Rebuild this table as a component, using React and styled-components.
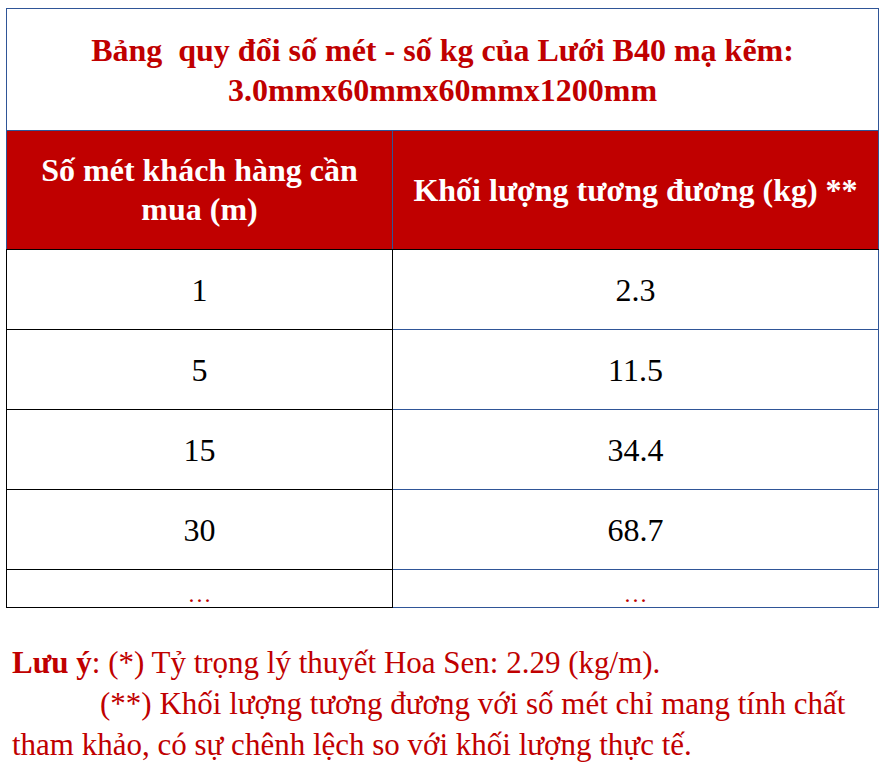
import React from "react";
import styled, { createGlobalStyle } from "styled-components";

const Global = createGlobalStyle`
  html, body { margin: 0; padding: 0; background: #fff; }
  body { font-family: "Liberation Serif", "Times New Roman", serif; }
`;

const Page = styled.div`
  padding: 8px 7px 0 6px;
  width: 885px;
  box-sizing: border-box;
`;

const Table = styled.table`
  width: 872px;
  border-collapse: collapse;
  table-layout: fixed;
  border: 1px solid #2f5597;
`;

const TitleCell = styled.td`
  height: 121px;
  padding: 0;
  text-align: center;
  color: #c00000;
  font-weight: bold;
  font-size: 32px;
  line-height: 40px;
  border-bottom: 1px solid #2f5597;
`;

const HeadCell = styled.th`
  height: 118px;
  padding: 0 10px;
  background: #c00000;
  color: #fff;
  font-weight: bold;
  font-size: 32px;
  line-height: 39px;
  text-align: center;
  border-right: 1px solid #2f5597;
  border-bottom: 1px solid #000;
`;

const Cell = styled.td`
  height: ${(p) => (p.$short ? "37px" : "79px")};
  padding: 0;
  text-align: center;
  vertical-align: ${(p) => (p.$short ? "bottom" : "middle")};
  font-size: ${(p) => (p.$short ? "24px" : "32px")};
  line-height: ${(p) => (p.$short ? "26px" : "34px")};
  color: ${(p) => (p.$short ? "#c00000" : "#000")};
  border-bottom: 1px solid ${(p) => (p.$left ? "#000" : "#2f5597")};
  border-right: 1px solid ${(p) => (p.$left ? "#000" : "#2f5597")};
  border-left: 1px solid ${(p) => (p.$left ? "#000" : "#2f5597")};
`;

const Note = styled.div`
  margin-top: 34px;
  padding-left: 6px;
  padding-right: 20px;
  color: #c00000;
  font-size: 31px;
  line-height: 41px;
`;

const Strong = styled.b`
  font-weight: bold;
`;

const Indent = styled.span`
  display: inline-block;
  width: 88px;
`;

const rows = [
  ["1", "2.3"],
  ["5", "11.5"],
  ["15", "34.4"],
  ["30", "68.7"],
];

export default function App() {
  return (
    <>
      <Global />
      <Page>
        <Table>
          <colgroup>
            <col style={{ width: "386px" }} />
            <col style={{ width: "486px" }} />
          </colgroup>
          <tbody>
            <tr>
              <TitleCell colSpan={2}>
                Bảng&nbsp; quy đổi số mét - số kg của Lưới B40 mạ kẽm:
                <br />
                3.0mmx60mmx60mmx1200mm
              </TitleCell>
            </tr>
            <tr>
              <HeadCell>Số mét khách hàng cần mua (m)</HeadCell>
              <HeadCell>Khối lượng tương đương (kg) **</HeadCell>
            </tr>
            {rows.map(([a, b]) => (
              <tr key={a}>
                <Cell $left>{a}</Cell>
                <Cell>{b}</Cell>
              </tr>
            ))}
            <tr>
              <Cell $left $short>…</Cell>
              <Cell $short>…</Cell>
            </tr>
          </tbody>
        </Table>
        <Note>
          <Strong>Lưu ý</Strong>: (*) Tỷ trọng lý thuyết Hoa Sen: 2.29 (kg/m).
          <br />
          <Indent />
          (**) Khối lượng tương đương với số mét chỉ mang tính chất tham khảo, có sự chênh lệch so với khối lượng thực tế.
        </Note>
      </Page>
    </>
  );
}
